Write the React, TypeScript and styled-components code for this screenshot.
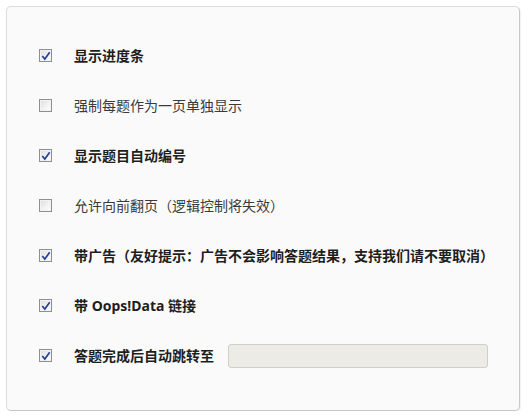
import React from "react";
import styled, { createGlobalStyle } from "styled-components";

const Global = createGlobalStyle`
  html, body { margin: 0; padding: 0; background: #ffffff; }
  body { font-family: "Noto Sans", "Noto Sans CJK SC", sans-serif; }
`;

const Panel = styled.div`
  box-sizing: border-box;
  margin: 6px 0 0 6px;
  width: 514px;
  height: 405px;
  background: #fafafa;
  border: 1px solid #dcdcdc;
  border-right-color: #c8c8c8;
  border-bottom-color: #c4c4c4;
  border-radius: 5px;
  box-shadow: 1px 1px 1px rgba(0, 0, 0, 0.06);
  padding: 24px 0 0 32px;
  display: flex;
  flex-direction: column;
`;

const Row = styled.label`
  height: 50px;
  display: flex;
  align-items: center;
  gap: 22px;
`;

const Box = styled.span<{ $checked: boolean }>`
  box-sizing: border-box;
  width: 13px;
  height: 13px;
  flex: none;
  border: 1px solid #8e8f8f;
  background: linear-gradient(135deg, #dcdcdc 0%, #f4f4f4 60%, #ffffff 100%);
  box-shadow: inset 0 0 0 1px #f2f2f2;
  display: flex;
  align-items: center;
  justify-content: center;
  margin-top: -1px;
`;

const Label = styled.span<{ $bold: boolean }>`
  font-family: "Noto Sans", "Noto Sans CJK SC", sans-serif;
  font-size: 14px;
  line-height: 20px;
  color: ${(p) => (p.$bold ? "#1e1e1e" : "#3a3a3a")};
  font-weight: ${(p) => (p.$bold ? 700 : 400)};
  white-space: nowrap;
`;

const Field = styled.input`
  box-sizing: border-box;
  margin-left: -8px;
  width: 260px;
  height: 24px;
  background: #ecebe6;
  border: 1px solid #cfcfcb;
  border-radius: 3px;
  outline: none;
`;

const Check = () => (
  <svg width="10" height="10" viewBox="0 0 10 10">
    <path d="M1.3 5 L3.8 8 L8.7 1.3" fill="none" stroke="#2b3f92" strokeWidth="1.7" />
  </svg>
);

const items: { text: string; checked: boolean; bold: boolean; field?: boolean }[] = [
  { text: "显示进度条", checked: true, bold: true },
  { text: "强制每题作为一页单独显示", checked: false, bold: false },
  { text: "显示题目自动编号", checked: true, bold: true },
  { text: "允许向前翻页（逻辑控制将失效）", checked: false, bold: false },
  { text: "带广告（友好提示：广告不会影响答题结果，支持我们请不要取消）", checked: true, bold: true },
  { text: "带 Oops!Data 链接", checked: true, bold: true },
  { text: "答题完成后自动跳转至", checked: true, bold: true, field: true },
];

export default function App() {
  return (
    <>
      <Global />
      <Panel>
        {items.map((it) => (
          <Row key={it.text}>
            <Box $checked={it.checked}>{it.checked && <Check />}</Box>
            <Label $bold={it.bold}>{it.text}</Label>
            {it.field && <Field disabled />}
          </Row>
        ))}
      </Panel>
    </>
  );
}
